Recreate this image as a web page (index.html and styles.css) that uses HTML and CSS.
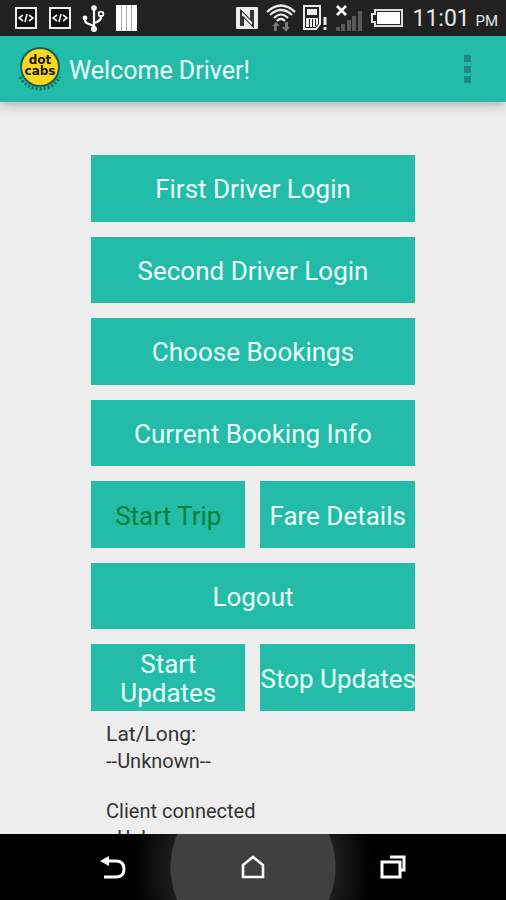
FILE: index.html
```html
<!DOCTYPE html>
<html lang="en">
<head>
  <meta charset="UTF-8">
  <meta name="viewport" content="width=device-width, initial-scale=1">
  <title>Welcome Driver!</title>
  <link rel="stylesheet" href="styles.css">
</head>
<body>
  <!-- Status bar -->
  <div class="status-bar">
    <div class="status-icons">
      <svg width="24" height="24" viewBox="0 0 24 24" fill="none" stroke="#eee" stroke-width="2">
        <rect x="2" y="2" width="20" height="20" fill="#111"/>
        <path d="M9 9l-4 3 4 3M15 9l4 3-4 3M13 8l-2 8" stroke-width="1.6"/>
      </svg>
      <svg width="24" height="24" viewBox="0 0 24 24" fill="none" stroke="#eee" stroke-width="2">
        <rect x="2" y="2" width="20" height="20" fill="#111"/>
        <path d="M9 9l-4 3 4 3M15 9l4 3-4 3M13 8l-2 8" stroke-width="1.6"/>
      </svg>
      <svg width="24" height="28" viewBox="0 0 24 28" fill="none" stroke="#fff" stroke-width="2.2">
        <path d="M12 4v19M3 14v2q0 3 4 4l5 2M19 11v2q0 3-4 5l-3 1"/>
        <circle cx="12" cy="4" r="2.8" fill="#fff" stroke="none"/>
        <circle cx="12" cy="25" r="3" fill="#fff" stroke="none"/>
        <circle cx="3" cy="14" r="2.4" fill="#fff" stroke="none"/>
        <circle cx="19" cy="10" r="2.4" stroke-width="1.6"/>
      </svg>
      <svg width="24" height="26" viewBox="0 0 24 26">
        <path fill="#fff" d="M0 0h21v26H0z"/>
        <path stroke="#aaa" d="M5.500 0v26M10.500 0v26M15.500 0v26"/>
      </svg>
    </div>
    <div class="status-icons right">
      <svg width="24" height="24" viewBox="0 0 24 24">
        <rect x="0" y="1" width="22" height="22" rx="1" fill="#eee"/>
        <path fill="none" stroke="#222" stroke-width="1.800" d="M5 20V5l10 10V4M7 10v10M7 10l10 10V4"/>
        <path fill="#eee" d="M6 6l10 10v3L6 9z"/>
      </svg>
      <svg width="30" height="28" viewBox="0 0 30 28" fill="none" stroke="#eee" stroke-width="2.200">
        <path d="M1 8q14-13 28 0M4 11q11-10 22 0M8 14q7-7 14 0M11 17q4-4 8 0"/>
        <path stroke="none" fill="#777" d="M10 18l4 4h-3v5H8v-5H6zM20 28l-4-5h3v-5h3v5h2z"/>
      </svg>
      <svg width="26" height="26" viewBox="0 0 26 26" fill="none" stroke="#eee" stroke-width="2">
        <path d="M2 1h16v18l-4 5H2z"/>
        <path fill="#eee" stroke="none" d="M5 4h10v6H5zM4 13h12v6l-3 3H4z"/>
        <path stroke="#222" stroke-width="1" d="M7.500 14v8M10.500 14v8M13.500 14v7"/>
        <path d="M23 12v8M23 22v3" stroke-width="3"/>
      </svg>
      <svg width="30" height="28" viewBox="0 0 30 28">
        <path fill="none" stroke="#fff" stroke-width="2.800" d="M3 2l9 9M12 2l-9 9"/>
        <path fill="#5a5a5a" d="M2 23h4v4H2zM7 20h4v7H7zM13 16h4v11h-4zM18 12h4v15h-4zM24 7h4v20h-4z"/>
      </svg>
      <svg width="34" height="20" viewBox="0 0 34 20">
        <path fill="none" stroke="#ddd" stroke-width="2" d="M5 2h27v16H5v-4H2V6h3z"/>
        <path fill="#fff" d="M7 4h23v12H7z"/>
      </svg>
      <span class="clock">11:01 <small>PM</small></span>
    </div>
  </div>

  <!-- App bar -->
  <header class="app-bar">
    <svg class="logo" width="46" height="46" viewBox="0 0 46 46">
      <circle cx="23" cy="21" r="20" fill="#145f4e"/>
      <circle cx="23" cy="21" r="18" fill="#fcd71c"/>
      <path d="M3 31q6 11 20 12 14-1 20-12" fill="none" stroke="#12705f" stroke-width="3" stroke-dasharray="2 2"/>
      <text x="23" y="18" text-anchor="middle" class="logo-text">dot</text>
      <text x="23" y="29" text-anchor="middle" class="logo-text">cabs</text>
    </svg>
    <h1>Welcome Driver!</h1>
    <button type="button" class="menu-btn" aria-label="More options">
      <svg width="8" height="30" viewBox="0 0 8 30">
        <path fill="#20897d" d="M0 1h7v7H0zM0 12h7v7H0zM0 22h7v7H0z"/>
      </svg>
    </button>
  </header>

  <main class="content">
    <div class="buttons">
      <button type="button" class="wide">First Driver Login</button>
      <button type="button" class="wide">Second Driver Login</button>
      <button type="button" class="wide">Choose Bookings</button>
      <button type="button" class="wide">Current Booking Info</button>
      <button type="button" class="start-trip">Start Trip</button>
      <button type="button">Fare Details</button>
      <button type="button" class="wide">Logout</button>
      <button type="button">Start<br>Updates</button>
      <button type="button">Stop Updates</button>
    </div>
    <div class="info">
      <p class="info-title">Lat/Long:</p>
      <p>--Unknown--</p>
      <p class="client">Client connected</p>
      <p>--Unknown--</p>
    </div>
  </main>

  <!-- Navigation bar -->
  <nav class="nav-bar">
    <button type="button" aria-label="Back">
      <svg width="26" height="24" viewBox="0 0 26 24">
        <path fill="none" stroke="#fff" stroke-width="3" d="M7 6h9q8 0 8 8t-8 8H4"/>
        <path fill="#fff" d="M0 6l9-5v10z"/>
      </svg>
    </button>
    <button type="button" class="home" aria-label="Home">
      <svg width="24" height="24" viewBox="0 0 24 24">
        <path fill="none" stroke="#fff" stroke-width="2.600" d="M2 22V10l10-8 10 8v12z"/>
      </svg>
    </button>
    <button type="button" aria-label="Recent apps">
      <svg width="26" height="24" viewBox="0 0 26 24">
        <path fill="none" stroke="#fff" stroke-width="3" d="M2 7h18v15H2zM10 2h14v13h-3"/>
      </svg>
    </button>
  </nav>
</body>
</html>
```
FILE: styles.css
```css
* {
  box-sizing: border-box;
}
body {
  margin: 0;
  height: 100vh;
  display: flex;
  flex-direction: column;
  background: #eee;
  font-family: Roboto, 'Liberation Sans', sans-serif;
}
button {
  border: none;
  padding: 0;
  background: none;
  font-family: inherit;
  cursor: pointer;
}
svg {
  display: block;
  flex: none;
}
.status-bar {
  height: 36px;
  flex: none;
  display: flex;
  align-items: center;
  justify-content: space-between;
  padding: 0 8px 0 14px;
  background: #222;
}
.status-icons {
  display: flex;
  align-items: center;
  gap: 10px;
}
.status-icons.right {
  gap: 6px;
}
.clock {
  margin-left: 2px;
  color: #e6e6e6;
  font-size: 23px;
  white-space: nowrap;
}
.clock small {
  font-size: 15px;
}
.app-bar {
  height: 66px;
  flex: none;
  display: flex;
  align-items: center;
  padding: 0 28px 0 17px;
  background: #22bca8;
  box-shadow: 0 2px 12px rgba(0, 0, 0, 0.3);
}
.logo-text {
  font: bold 12px 'DejaVu Sans', sans-serif;
  fill: #181808;
}
.app-bar h1 {
  flex: 1;
  margin: 0 0 0 6px;
  padding-top: 2px;
  font-size: 25px;
  font-weight: 400;
  color: #ecfffb;
}
.menu-btn {
  padding: 6px;
}
.content {
  flex: 1;
  min-height: 0;
  overflow: hidden;
  padding-top: 53px;
}
.buttons {
  width: 64%;
  height: 556px;
  margin: 0 auto;
  display: grid;
  grid-template-columns: 1fr 1fr;
  grid-template-rows: repeat(7, 1fr);
  gap: 15px;
}
.buttons button {
  min-width: 0;
  padding-top: 3px;
  background: #22bca8;
  color: #ecfffb;
  font-size: 26px;
  line-height: 29px;
  white-space: nowrap;
}
.buttons .wide {
  grid-column: span 2;
}
.buttons .start-trip {
  color: #087f36;
}
.info {
  width: 64%;
  margin: 0 auto;
  padding: 10px 15px 0;
  color: #333;
  font-size: 20px;
  line-height: 27px;
}
.info p {
  margin: 0;
}
.info .info-title {
  font-size: 21px;
}
.info .client {
  margin-top: 23px;
}
.nav-bar {
  height: 66px;
  flex: none;
  display: flex;
  align-items: center;
  justify-content: center;
  background: radial-gradient(circle at center, #404040 82px, #1c1c1c 83px, #000 120px);
}
.nav-bar button {
  width: 140px;
  height: 100%;
  display: flex;
  align-items: center;
  justify-content: center;
}
```
